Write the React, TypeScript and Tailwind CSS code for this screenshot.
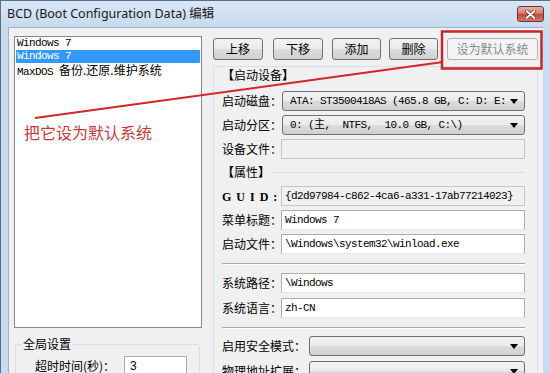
import React from 'react';

const MONO = "font-['Liberation_Mono','Noto_Sans_CJK_SC',monospace] text-[11px] tracking-[-0.6px]";
const BTN =
  'h-[22px] rounded-[3px] border border-[#707070] bg-[linear-gradient(#f2f2f2,#ebebeb_50%,#dddddd_50%,#cfcfcf)] text-[12px] leading-none text-black';

const Arrow = () => (
  <svg width="8" height="5" viewBox="0 0 8 5" className="shrink-0">
    <path d="M0 0H8L4 5Z" fill="#000" />
  </svg>
);

const Combo = ({ text }: { text?: string }) => (
  <div className="flex-1 min-w-0 ml-[1px] h-[20px] rounded-[3px] border border-[#707070] bg-[linear-gradient(#f2f2f2,#ebebeb_50%,#dddddd_50%,#cfcfcf)] flex items-center pl-[7px] pr-[6px]">
    <span className={`flex-1 min-w-0 whitespace-pre overflow-hidden ${MONO}`}>{text}</span>
    <Arrow />
  </div>
);

const TextBox = ({ text, readOnly }: { text?: string; readOnly?: boolean }) => (
  <div
    className={`flex-1 min-w-0 h-[20px] border flex items-center pl-[3px] overflow-hidden ${
      readOnly ? 'bg-[#f0f0f0] border-[#c3c7cc]' : 'bg-white border-[#abadb3] border-b-[#e3e9ef]'
    }`}
  >
    <span className={`whitespace-pre ${MONO}`}>{text}</span>
  </div>
);

const Field = ({
  label,
  className,
  labelClass = 'w-[59px]',
  children,
}: {
  label: React.ReactNode;
  className: string;
  labelClass?: string;
  children: React.ReactNode;
}) => (
  <div className={`flex items-center h-[20px] ${className}`}>
    <span className={`shrink-0 whitespace-nowrap leading-[14px] ${labelClass}`}>{label}</span>
    {children}
  </div>
);

const Sep = ({ className }: { className: string }) => (
  <div className={`h-[2px] border-t border-[#a9a9a9] border-b border-b-white ${className}`} />
);

const Heading = ({ text }: { text: string }) => (
  <span className="leading-[14px]">
    <span className="font-black">【</span>
    {text}
    <span className="font-black">】</span>
  </span>
);

export default function App() {
  return (
    <div className="w-[550px] h-[373px] overflow-hidden relative bg-[#c9dbef] border-l border-t border-[#5c6e86] flex flex-col font-['Noto_Sans_CJK_SC',sans-serif] text-[12px] text-black">
      {/* title bar */}
      <div className="h-[26px] shrink-0 flex bg-[linear-gradient(#d9e7f6,#c8daef)] pl-[6px]">
        <span className="mt-[5px] font-['Noto_Sans','Noto_Sans_CJK_SC',sans-serif] text-[12.5px] leading-[16px] text-[#1b1b1b]">
          BCD (Boot Configuration Data) 编辑
        </span>
        <div className="ml-auto mr-[6px] mt-[5px] w-[27px] h-[16px] rounded-[3px] border border-[#6e3434] bg-[linear-gradient(#eab0a6,#d77464_50%,#c24531_50%,#d27a66)] flex items-center justify-center">
          <svg width="11" height="9" viewBox="0 0 11 9">
            <path d="M1.5 1L9.5 8M9.5 1L1.5 8" stroke="#5a2a2a" strokeWidth="3.2" strokeLinecap="round" />
            <path d="M1.5 1L9.5 8M9.5 1L1.5 8" stroke="#fff" strokeWidth="1.8" strokeLinecap="round" />
          </svg>
        </div>
      </div>

      {/* body */}
      <div className="flex-1 flex pl-[7px] pr-[7px]">
        <div className="flex-1 flex bg-[#f0f0f0] border-l border-t border-[#9fb2c9]">
          {/* left column */}
          <div className="w-[188px] ml-[5px] mt-[8px] shrink-0 flex flex-col">
            <div className="h-[292px] border border-[#828790] bg-white">
              <div className={`h-[13px] leading-[13px] mx-[1px] px-[1px] ${MONO}`}>Windows 7</div>
              <div className={`h-[13px] leading-[13px] mx-[1px] px-[1px] bg-[#3399ff] text-white ${MONO}`}>
                Windows 7
              </div>
              <div className={`h-[13px] leading-[13px] mx-[1px] px-[1px] ${MONO}`}>
                MaxDOS{' '}
                <span className="font-['Noto_Sans_CJK_SC',sans-serif] text-[12px] tracking-normal">备份.还原.维护系统</span>
              </div>
            </div>
            <fieldset className="mt-[9px] ml-[1px] w-[185px] h-[60px] border border-[#d5dfe5] rounded-[3px]">
              <legend className="ml-[6px] px-[1px] leading-[14px]">全局设置</legend>
              <div className="flex items-center h-[20px] mt-[5px] pl-[19px]">
                <span className="w-[89px] whitespace-nowrap leading-[14px]">超时时间(秒)：</span>
                <div className="w-[63px] h-[20px] bg-white border border-[#abadb3] flex items-center pl-[5px] font-['Liberation_Sans',sans-serif] text-[12px]">
                  3
                </div>
              </div>
            </fieldset>
          </div>

          {/* right column */}
          <div className="w-[325px] ml-[11px] mt-[10px] shrink-0 flex flex-col">
            <div className="flex">
              <button className={`${BTN} w-[50px]`}>上移</button>
              <button className={`${BTN} w-[50px] ml-[10px]`}>下移</button>
              <button className={`${BTN} w-[49px] ml-[9px]`}>添加</button>
              <button className={`${BTN} w-[49px] ml-[8px]`}>删除</button>
              <button className="h-[22px] w-[91px] ml-[9px] rounded-[3px] border border-[#adb2b5] bg-[#f4f4f4] text-[12px] leading-none text-[#8a8a8a]">
                设为默认系统
              </button>
            </div>

            <div className="mt-[6px] h-[400px] border border-[#d5dfe5] pl-[8px] pr-[12px] flex flex-col">
              <div className="mt-[1px] h-[14px] flex items-center">
                <Heading text="启动设备" />
              </div>
              <Field label="启动磁盘：" className="mt-[9px]">
                <Combo text="ATA: ST3500418AS (465.8 GB, C: D: E:" />
              </Field>
              <Field label="启动分区：" className="mt-[4px]">
                <Combo text={'0: (主,  NTFS,  10.0 GB, C:\\)'} />
              </Field>
              <Field label="设备文件：" className="mt-[4px]">
                <TextBox readOnly />
              </Field>
              <div className="mt-[6px] h-[14px] flex items-center">
                <Heading text="属性" />
                <div className="flex-1 ml-[2px] border-t border-[#d5dfe5]" />
              </div>
              <Field
                label={<span className="font-['Liberation_Serif',serif] font-bold tracking-[5px]">GUID:</span>}
                className="mt-[7px]"
              >
                <TextBox readOnly text="{d2d97984-c862-4ca6-a331-17ab77214023}" />
              </Field>
              <Field label="菜单标题：" className="mt-[4px]">
                <TextBox text="Windows 7" />
              </Field>
              <Field label="启动文件：" className="mt-[4px]">
                <TextBox text={'\\Windows\\system32\\winload.exe'} />
              </Field>
              <Sep className="mt-[9px]" />
              <Field label="系统路径：" className="mt-[8px]">
                <TextBox text={'\\Windows'} />
              </Field>
              <Field label="系统语言：" className="mt-[5px]">
                <TextBox text="zh-CN" />
              </Field>
              <Sep className="mt-[9px]" />
              <Field label="启用安全模式：" labelClass="w-[86px]" className="mt-[7px]">
                <Combo />
              </Field>
              <Field label="物理地址扩展：" labelClass="w-[86px]" className="mt-[5px]">
                <Combo />
              </Field>
            </div>
          </div>
        </div>
      </div>

      {/* red annotation drawn over the screenshot */}
      <svg className="absolute left-[-1px] top-[-1px] pointer-events-none" width="550" height="373">
        <line x1="35" y1="118" x2="443" y2="62" stroke="#d2262b" strokeWidth="2" />
        <rect x="442" y="31.5" width="99.5" height="37" fill="none" stroke="#c3262d" strokeWidth="2.5" />
      </svg>
      <div className="absolute left-[23px] top-[121px] text-[16px] leading-[20px] text-[#c53a3c]">把它设为默认系统</div>
    </div>
  );
}
